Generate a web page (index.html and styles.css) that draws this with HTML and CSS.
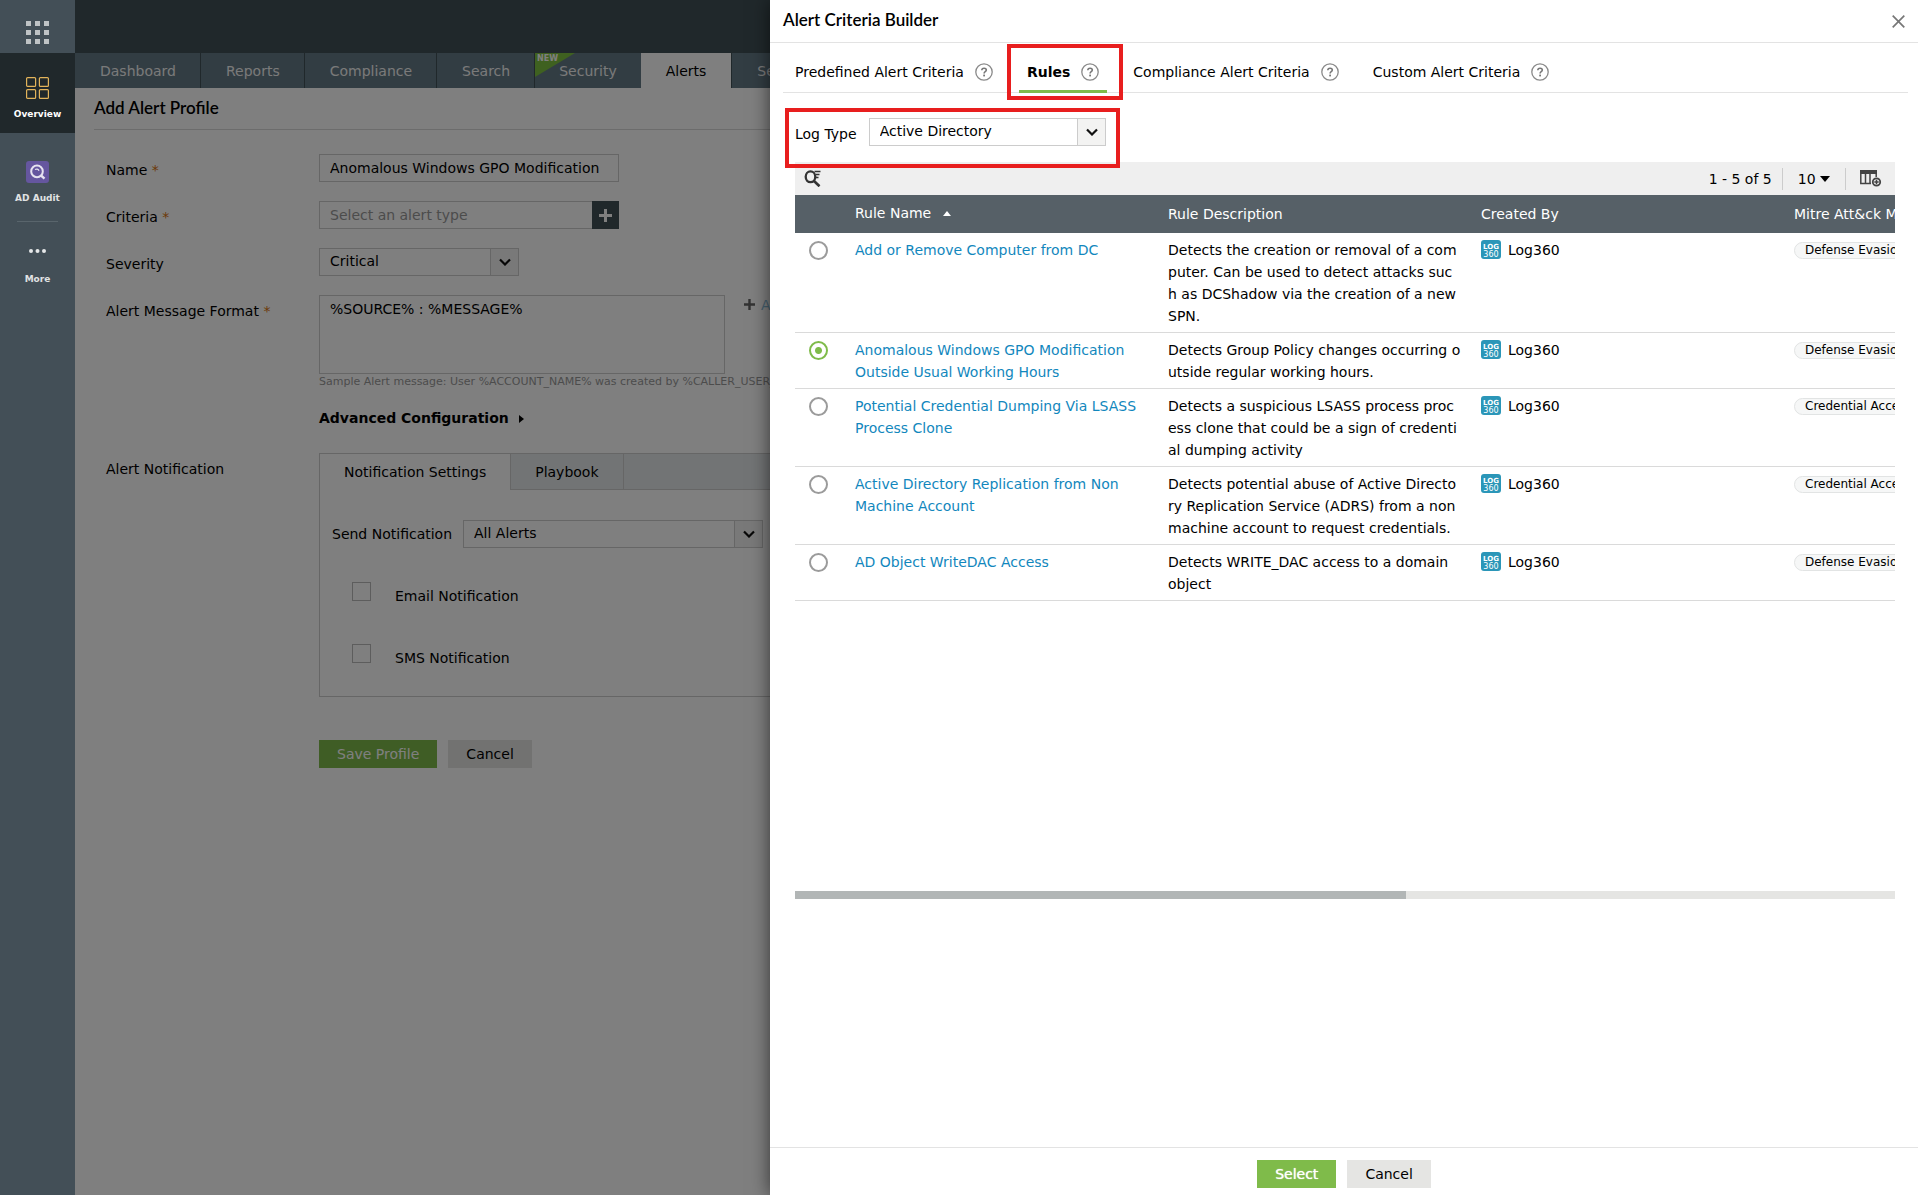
FILE: index.html
```html
<!DOCTYPE html>
<html lang="en">
<head>
  <meta charset="utf-8">
  <title>Alert Criteria Builder</title>
  <link rel="stylesheet" href="styles.css">
</head>
<body>
  <svg class="sprite" aria-hidden="true">
    <symbol id="chevron" viewBox="0 0 12 8"><path d="M1 1.5l5 5 5-5" fill="none" stroke="#111" stroke-width="2.2"/></symbol>
    <symbol id="help" viewBox="0 0 18 18">
      <circle cx="9" cy="9" r="8.2" fill="none" stroke="#8a8a8a" stroke-width="1.3"/>
      <path d="M6.8 7.3c0-1.3 1-2.1 2.3-2.1s2.2.8 2.2 1.9c0 1.6-2.2 1.6-2.2 3.3" fill="none" stroke="#777" stroke-width="1.6"/>
      <rect x="8.2" y="11.6" width="1.8" height="1.8" fill="#777"/>
    </symbol>
    <symbol id="log360" viewBox="0 0 20 20">
      <rect width="20" height="19" rx="3" fill="#2b96b8"/>
      <text x="10" y="8.6" class="logo-top">LOG</text>
      <text x="10" y="17" class="logo-bottom">360</text>
    </symbol>
  </svg>

  <div class="page">
    <nav class="sidebar">
      <button type="button" class="apps" aria-label="Apps">
        <svg width="23" height="23" viewBox="0 0 23 23" fill="#bfc3c5">
          <path d="M0 0h5v5H0zM9 0h5v5H9zM18 0h5v5h-5zM0 9h5v5H0zM9 9h5v5H9zM18 9h5v5h-5zM0 18h5v5H0zM9 18h5v5H9zM18 18h5v5h-5z"/>
        </svg>
      </button>
      <a href="#" class="side-item active">
        <svg width="23" height="22" viewBox="0 0 23 22" fill="none" stroke="#e2b35a" stroke-width="1.2">
          <rect x=".6" y=".6" width="9" height="8.8" rx="1"/><rect x="13.4" y=".6" width="9" height="8.8" rx="1"/>
          <rect x=".6" y="12.6" width="9" height="8.8" rx="1"/><rect x="13.4" y="12.6" width="9" height="8.8" rx="1"/>
        </svg>
        Overview
      </a>
      <a href="#" class="side-item">
        <svg width="23" height="22" viewBox="0 0 23 22">
          <rect width="23" height="22" rx="3" fill="#65569f"/>
          <circle cx="11" cy="10.4" r="5.8" fill="none" stroke="#e6e3f0" stroke-width="2"/>
          <path d="M14.5 14l4 3.6" stroke="#e6e3f0" stroke-width="2.4"/>
          <path d="M9 8.6c1.6-1 3.4-.5 4 1.2" fill="none" stroke="#e6e3f0" stroke-width="1.2"/>
        </svg>
        AD Audit
      </a>
      <hr>
      <a href="#" class="side-item more">
        <svg width="17" height="22" viewBox="0 0 17 22" fill="#e6e8e9"><circle cx="2" cy="11" r="2"/><circle cx="8.5" cy="11" r="2"/><circle cx="15" cy="11" r="2"/></svg>
        More
      </a>
    </nav>

    <div class="main">
      <div class="topbar"></div>
      <nav class="tabs">
        <a href="#">Dashboard</a>
        <a href="#">Reports</a>
        <a href="#">Compliance</a>
        <a href="#">Search</a>
        <a href="#" class="has-badge"><svg class="ribbon" width="40" height="24" viewBox="0 0 40 24"><path d="M0 0h40L0 24z" fill="#7fc241"/><text x="2" y="8">NEW</text></svg>Security</a>
        <a href="#" class="active">Alerts</a>
        <a href="#">Settings</a>
      </nav>

      <div class="content">
        <h1>Add Alert Profile</h1>
        <form class="profile">
          <div class="row">
            <label class="name" for="profile-name">Name <i>*</i></label>
            <input type="text" id="profile-name" class="box wide" value="Anomalous Windows GPO Modification">
          </div>
          <div class="row">
            <label class="name" for="criteria">Criteria <i>*</i></label>
            <div class="wide criteria">
              <input type="text" id="criteria" class="box" placeholder="Select an alert type">
              <button type="button" class="add" aria-label="Add criteria">
                <svg width="13" height="13" viewBox="0 0 13 13"><path d="M6.5 0v13M0 6.5h13" stroke="#fff" stroke-width="3"/></svg>
              </button>
            </div>
          </div>
          <div class="row">
            <label class="name" for="severity">Severity</label>
            <div class="select severity">
              <select id="severity"><option>Critical</option></select>
              <span class="arrow"><svg width="12" height="8"><use href="#chevron"/></svg></span>
            </div>
          </div>
          <div class="row">
            <label class="name" for="format">Alert Message Format <i>*</i></label>
            <div class="format">
              <div class="format-line">
                <textarea id="format" class="box">%SOURCE% : %MESSAGE%</textarea>
                <a href="#" class="macro"><svg width="11" height="11" viewBox="0 0 11 11"><path d="M5.5 0v11M0 5.5h11" stroke="#666" stroke-width="2.4"/></svg>Add</a>
              </div>
              <p class="sample">Sample Alert message: User %ACCOUNT_NAME% was created by %CALLER_USER_NAME%</p>
              <button type="button" class="advanced">Advanced Configuration <svg width="5" height="8" viewBox="0 0 5 8"><path d="M0 0l5 4-5 4z"/></svg></button>
            </div>
          </div>
          <div class="row notify-row">
            <span class="name">Alert Notification</span>
            <div class="panel">
              <div class="panel-tabs">
                <button type="button" class="active">Notification Settings</button>
                <button type="button">Playbook</button>
              </div>
              <div class="panel-body">
                <div class="send">
                  <label for="send">Send Notification</label>
                  <div class="select">
                    <select id="send"><option>All Alerts</option></select>
                    <span class="arrow"><svg width="12" height="8"><use href="#chevron"/></svg></span>
                  </div>
                </div>
                <div class="check"><input type="checkbox" id="email"><label for="email">Email Notification</label></div>
                <div class="check"><input type="checkbox" id="sms"><label for="sms">SMS Notification</label></div>
              </div>
            </div>
          </div>
          <div class="actions">
            <button type="button" class="btn green">Save Profile</button>
            <button type="button" class="btn">Cancel</button>
          </div>
        </form>
      </div>
      <div class="shade"></div>
    </div>

    <section class="drawer">
      <header>
        <h2>Alert Criteria Builder</h2>
        <button type="button" class="close" aria-label="Close"><svg width="13" height="13" viewBox="0 0 13 13"><path d="M.7.7l11.6 11.6M12.3.7L.7 12.3" stroke="#777" stroke-width="1.7"/></svg></button>
      </header>

      <nav class="criteria-tabs">
        <a href="#">Predefined Alert Criteria <svg width="18" height="18"><use href="#help"/></svg></a>
        <a href="#" class="active marked">Rules <svg width="18" height="18"><use href="#help"/></svg></a>
        <a href="#">Compliance Alert Criteria <svg width="18" height="18"><use href="#help"/></svg></a>
        <a href="#">Custom Alert Criteria <svg width="18" height="18"><use href="#help"/></svg></a>
      </nav>

      <div class="drawer-body">
        <div class="log-type marked">
          <label for="log-type">Log Type</label>
          <div class="select">
            <select id="log-type"><option>Active Directory</option></select>
            <span class="arrow"><svg width="12" height="8"><use href="#chevron"/></svg></span>
          </div>
        </div>

        <div class="toolbar">
          <button type="button" class="search" aria-label="Search">
            <svg width="17" height="17" viewBox="0 0 17 17" fill="none" stroke="#333">
              <ellipse cx="6.5" cy="6.8" rx="4.8" ry="5.4" stroke-width="2.3"/>
              <path d="M9.500 10.500l6 5.800" stroke-width="2.600"/>
              <path d="M10.500 1.500h6M12 4.500h3.500M12 7.500h2.500" stroke-width="1.400"/>
            </svg>
          </button>
          <span class="count">1 - 5 of 5</span>
          <button type="button" class="size">10 <svg width="10" height="6" viewBox="0 0 10 6"><path d="M0 0h10L5 6z"/></svg></button>
          <button type="button" class="columns" aria-label="Columns">
            <svg width="22" height="17" viewBox="0 0 22 17" fill="none" stroke="#444">
              <path d="M0 2h17" stroke-width="4"/><path d="M.8 2v11.500H11M5.500 3v10M10 3v10M16.200 3v4" stroke-width="1.500"/>
              <circle cx="16.500" cy="12" r="3.700" stroke-width="1.800"/><path d="M16.500 9.800v4.400M14.300 12h4.400" stroke-width="1.500"/>
            </svg>
          </button>
        </div>

        <div class="grid-wrap">
          <table>
            <colgroup><col class="c-pick"><col class="c-col"><col class="c-col"><col class="c-col"><col></colgroup>
            <thead>
              <tr>
                <th></th>
                <th class="sorted">Rule Name <svg width="8" height="5" viewBox="0 0 8 5"><path d="M0 5h8L4 0z" fill="#fff"/></svg></th>
                <th>Rule Description</th>
                <th>Created By</th>
                <th>Mitre Att&amp;ck Mapping</th>
              </tr>
            </thead>
            <tbody>
              <tr>
                <td><input type="radio" name="rule" aria-label="Add or Remove Computer from DC"></td>
                <td><a href="#">Add or Remove Computer from DC</a></td>
                <td>Detects the creation or removal of a com<br>puter. Can be used to detect attacks suc<br>h as DCShadow via the creation of a new<br>SPN.</td>
                <td><svg class="logo" width="20" height="20"><use href="#log360"/></svg>Log360</td>
                <td><span class="chip">Defense Evasion</span></td>
              </tr>
              <tr>
                <td><input type="radio" name="rule" aria-label="Anomalous Windows GPO Modification Outside Usual Working Hours" checked></td>
                <td><a href="#">Anomalous Windows GPO Modification Outside Usual Working Hours</a></td>
                <td>Detects Group Policy changes occurring o<br>utside regular working hours.</td>
                <td><svg class="logo" width="20" height="20"><use href="#log360"/></svg>Log360</td>
                <td><span class="chip">Defense Evasion</span></td>
              </tr>
              <tr>
                <td><input type="radio" name="rule" aria-label="Potential Credential Dumping Via LSASS Process Clone"></td>
                <td><a href="#">Potential Credential Dumping Via LSASS Process Clone</a></td>
                <td>Detects a suspicious LSASS process proc<br>ess clone that could be a sign of credenti<br>al dumping activity</td>
                <td><svg class="logo" width="20" height="20"><use href="#log360"/></svg>Log360</td>
                <td><span class="chip">Credential Access</span></td>
              </tr>
              <tr>
                <td><input type="radio" name="rule" aria-label="Active Directory Replication from Non Machine Account"></td>
                <td><a href="#">Active Directory Replication from Non Machine Account</a></td>
                <td>Detects potential abuse of Active Directo<br>ry Replication Service (ADRS) from a non<br>machine account to request credentials.</td>
                <td><svg class="logo" width="20" height="20"><use href="#log360"/></svg>Log360</td>
                <td><span class="chip">Credential Access</span></td>
              </tr>
              <tr>
                <td><input type="radio" name="rule" aria-label="AD Object WriteDAC Access"></td>
                <td><a href="#">AD Object WriteDAC Access</a></td>
                <td>Detects WRITE_DAC access to a domain<br>object</td>
                <td><svg class="logo" width="20" height="20"><use href="#log360"/></svg>Log360</td>
                <td><span class="chip">Defense Evasion</span></td>
              </tr>
            </tbody>
          </table>
        </div>
        <div class="scroll"><div class="thumb"></div></div>
      </div>

      <footer>
        <button type="button" class="btn green strong">Select</button>
        <button type="button" class="btn">Cancel</button>
      </footer>
    </section>
  </div>
</body>
</html>
```

FILE: styles.css
```css
* {
  box-sizing: border-box;
}

body {
  margin: 0;
  font: 14px/20px "DejaVu Sans", sans-serif;
  color: #000;
}

a {
  color: inherit;
  text-decoration: none;
}

button,
input,
select,
textarea {
  font: inherit;
  color: inherit;
  margin: 0;
}

button {
  border: 0;
  padding: 0;
  background: none;
  cursor: pointer;
}

.sprite {
  position: absolute;
  width: 0;
  height: 0;
}

.page {
  display: flex;
  position: relative;
  min-height: 100vh;
  overflow: hidden;
}

/* left sidebar */
.sidebar {
  flex: none;
  width: 75px;
  background: #434f57;
}

.apps {
  display: flex;
  align-items: center;
  justify-content: center;
  width: 100%;
  height: 53px;
  padding-top: 12px;
}

.side-item {
  display: flex;
  flex-direction: column;
  align-items: center;
  gap: 7px;
  height: 80px;
  padding-top: 24px;
  font-size: 9px;
  line-height: 16px;
  font-weight: bold;
  color: #e0e2e3;
}

.side-item.active {
  background: #20282b;
  color: #fff;
  margin-bottom: 4px;
}

.side-item.more {
  padding-top: 18px;
  gap: 9px;
}

.sidebar hr {
  width: 41px;
  margin: 4px auto 0;
  border: 0;
  border-top: 1px solid #59656c;
}

/* page under the drawer */
.main {
  flex: 1;
  min-width: 0;
  position: relative;
  background: #fff;
}

.shade {
  position: absolute;
  inset: 0;
  background: rgba(0, 0, 0, 0.5);
}

.topbar {
  height: 53px;
  background: #405056;
}

.tabs {
  display: flex;
  height: 35px;
  background: #647a86;
  color: #f4f4f4;
}

.tabs a {
  position: relative;
  padding: 0 24px 0 25px;
  line-height: 36px;
  border-right: 1px solid #405056;
}

.tabs .has-badge {
  padding: 0 24px;
  border-right: 0;
}

.tabs .active {
  padding: 0 25px;
  background: #fff;
  color: #000;
}

.ribbon {
  position: absolute;
  left: 0;
  top: 0;
}

.ribbon text {
  font-size: 8px;
  font-weight: bold;
  fill: #fff;
}

.content {
  padding: 0 19px;
}

h1,
h2 {
  margin: 0;
  font: 600 17px/39px Lato, sans-serif;
}

h1 {
  padding-bottom: 2px;
  border-bottom: 1px solid #d8d8d8;
}

.profile {
  display: flex;
  flex-direction: column;
  gap: 15px;
  padding: 24px 12px;
}

.row {
  display: flex;
  align-items: flex-start;
}

.name {
  flex: none;
  width: 213px;
  line-height: 32px;
}

.name i {
  color: #d9720c;
  font-style: normal;
}

.box {
  height: 28px;
  padding: 0 10px;
  border: 1px solid #ccc;
  border-radius: 0;
  background: #fff;
}

.box::placeholder {
  color: #999;
}

.wide {
  width: 300px;
}

.criteria {
  display: flex;
}

.criteria .box {
  flex: 1;
  min-width: 0;
  border-right: 0;
}

.add {
  display: flex;
  align-items: center;
  justify-content: center;
  width: 27px;
  background: #405056;
}

.select {
  position: relative;
}

.select select {
  appearance: none;
  display: block;
  width: 100%;
  height: 28px;
  padding: 0 32px 2px 10px;
  border: 1px solid #ccc;
  border-radius: 0;
  background: #fff;
}

.select .arrow {
  position: absolute;
  top: 1px;
  right: 1px;
  bottom: 1px;
  width: 28px;
  display: flex;
  align-items: center;
  justify-content: center;
  border-left: 1px solid #ccc;
  background: #f3f3f2;
  pointer-events: none;
}

.severity {
  width: 200px;
}

.format-line {
  display: flex;
  gap: 19px;
}

textarea.box {
  width: 406px;
  height: 79px;
  padding: 3px 10px;
  resize: none;
}

.macro {
  display: flex;
  align-items: baseline;
  gap: 6px;
  color: #8dc0dc;
}

.sample {
  margin: 0;
  font-size: 11px;
  line-height: 16px;
  color: #999;
  white-space: nowrap;
}

.advanced {
  margin-top: 18px;
  font-weight: bold;
}

.advanced svg {
  margin-left: 5px;
}

.notify-row {
  margin-top: 10px;
}

.panel {
  flex: 1;
  border: 1px solid #ccc;
}

.panel-tabs {
  display: flex;
  background: #e5e9eb;
  border-bottom: 1px solid #ccc;
}

.panel-tabs button {
  height: 35px;
  padding: 0 24px;
  border-right: 1px solid #ccc;
}

.panel-tabs .active {
  height: 36px;
  margin-bottom: -1px;
  background: #fff;
}

.panel-body {
  display: flex;
  flex-direction: column;
  gap: 34px;
  padding: 30px 12px 24px;
}

.send {
  display: flex;
  align-items: center;
  gap: 11px;
}

.send .select {
  width: 300px;
}

.check {
  display: flex;
  align-items: flex-start;
  gap: 24px;
  padding-left: 20px;
}

.check label {
  line-height: 28px;
}

.check input {
  appearance: none;
  width: 19px;
  height: 19px;
  border: 1px solid #bbb;
}

.actions {
  display: flex;
  gap: 11px;
  margin: 28px 0 0 213px;
}

.btn {
  height: 28px;
  padding: 0 18px;
  background: #e5e5e3;
}

.btn.green {
  background: #7fbb4a;
  color: #fff;
}

.btn.strong {
  text-shadow: 0 0 1px #fff;
}

/* criteria drawer */
.drawer {
  position: absolute;
  top: 0;
  right: 0;
  bottom: 0;
  left: 770px;
  display: flex;
  flex-direction: column;
  background: #fff;
  box-shadow: 0 0 18px rgba(0, 0, 0, 0.6);
}

.drawer header {
  display: flex;
  align-items: flex-start;
  justify-content: space-between;
  height: 43px;
  padding: 0 13px;
  border-bottom: 1px solid #e3e3e3;
}

.close {
  display: flex;
  padding-top: 15px;
}

.criteria-tabs {
  display: flex;
  gap: 18px;
  height: 50px;
  margin: 0 10px 0 13px;
  padding: 7px 4px 0;
  border-bottom: 1px solid #e3e3e3;
}

.criteria-tabs a {
  display: flex;
  align-items: center;
  gap: 11px;
  height: 43px;
  padding: 0 8px;
}

.criteria-tabs .active {
  padding-top: 3px;
  border-bottom: 3px solid #7fbb4a;
  font-weight: bold;
}

.marked {
  position: relative;
}

/* red callout frames */
.marked::after {
  content: "";
  position: absolute;
  border: 4px solid #e81e1e;
  pointer-events: none;
}

.criteria-tabs .marked::after {
  inset: -6px -16px -10px -12px;
}

.log-type.marked::after {
  inset: -10px -14px -22px -10px;
}

.drawer-body {
  flex: 1;
  padding: 25px 23px 0 25px;
}

.log-type {
  display: flex;
  align-items: center;
  gap: 12px;
  width: 311px;
  margin-bottom: 16px;
}

.log-type label {
  flex: none;
  padding-top: 4px;
}

.log-type .select {
  flex: 1;
}

.toolbar {
  display: flex;
  align-items: center;
  height: 33px;
  padding: 0 13px 0 9px;
  background: #efefef;
}

.search,
.columns {
  display: flex;
}

.count {
  margin-left: auto;
  padding-right: 10px;
}

.size {
  height: 22px;
  padding: 0 15px;
  border: solid #ccc;
  border-width: 0 1px;
  margin-right: 14px;
}

.size svg {
  vertical-align: 2px;
}

.grid-wrap {
  min-height: 696px;
  overflow: hidden;
}

table {
  width: 180%;
  table-layout: fixed;
  border-collapse: separate;
  border-spacing: 0;
}

.c-pick {
  width: 60px;
}

.c-col {
  width: 313px;
}

th {
  height: 38px;
  padding: 0;
  text-align: left;
  font-weight: normal;
  color: #fff;
  background: #566067;
}

th.sorted {
  padding-bottom: 3px;
}

th.sorted svg {
  margin-left: 7px;
  vertical-align: 2px;
}

td {
  padding: 6px 22px 5px 0;
  line-height: 22px;
  vertical-align: top;
  border-bottom: 1px solid #dadada;
}

td:nth-child(3) {
  padding-right: 0;
  white-space: nowrap;
}

td a {
  color: #1287bd;
}

td input {
  appearance: none;
  display: block;
  width: 19px;
  height: 19px;
  margin: 2px 0 0 14px;
  border: 2px solid #9b9b9b;
  border-radius: 50%;
}

td input:checked {
  border-color: #7fbb4a;
  background: radial-gradient(#7fbb4a 3px, #fff 4px);
}

.logo {
  margin-right: 7px;
  vertical-align: top;
  margin-top: 1px;
}

.logo-top,
.logo-bottom {
  font-size: 7px;
  text-anchor: middle;
  fill: #fff;
}

.logo-top {
  font-weight: bold;
}

.logo-bottom {
  font-size: 8px;
}

.chip {
  display: inline-block;
  margin-top: 3px;
  padding: 0 10px;
  border: 1px solid #e2e4e4;
  border-radius: 9px;
  background: #f6f7f7;
  font-size: 12px;
  line-height: 15px;
  vertical-align: top;
}

.scroll {
  height: 8px;
  background: #e5e5e3;
}

.thumb {
  width: 55.5%;
  height: 8px;
  background: #b2b6b6;
}

.drawer footer {
  display: flex;
  justify-content: center;
  gap: 11px;
  height: 48px;
  padding-top: 12px;
  border-top: 1px solid #e3e3e3;
}
```
